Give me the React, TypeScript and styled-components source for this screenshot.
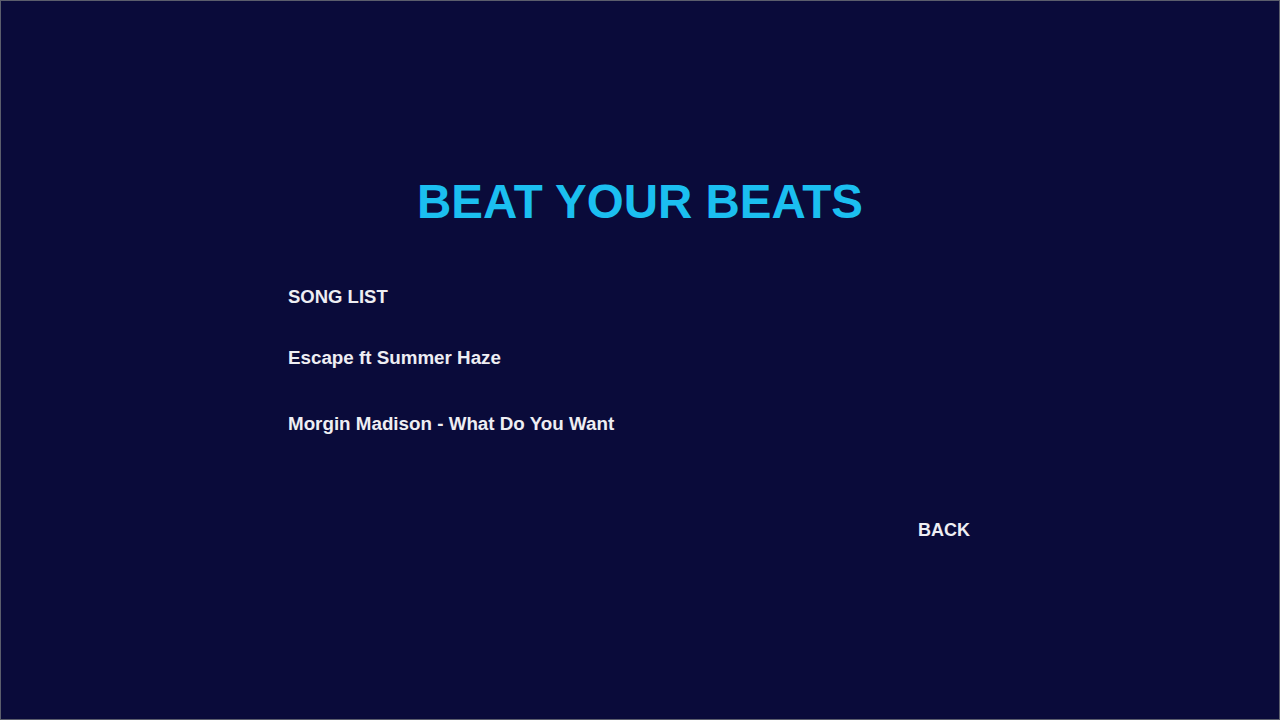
import { createGlobalStyle, styled } from 'styled-components';

const songs = ['Escape ft Summer Haze', 'Morgin Madison - What Do You Want'];

const GlobalStyle = createGlobalStyle`
  html, body {
    margin: 0;
    padding: 0;
    background: #0a0b3a;
  }
  * {
    box-sizing: border-box;
  }
`;

export default function App() {
  return (
    <>
      <GlobalStyle />
      <Screen>
        <Title>BEAT YOUR BEATS</Title>
        <Menu>
          <Heading>SONG LIST</Heading>
          <SongList>
            {songs.map((song) => (
              <Song key={song}>{song}</Song>
            ))}
          </SongList>
          <BackButton>BACK</BackButton>
        </Menu>
      </Screen>
    </>
  );
}

const Screen = styled.div`
  width: 100%;
  height: 100vh;
  border: 1px solid #5b5e6c;
  background: #0a0b3a;
  padding-top: 178px;
  display: flex;
  flex-direction: column;
  align-items: center;
  font-family: 'Liberation Sans', Arial, sans-serif;
  font-weight: 700;
`;

const Title = styled.h1`
  margin: 0;
  font-size: 47.5px;
  line-height: 46px;
  font-weight: 700;
  color: #1bbff0;
`;

const Menu = styled.div`
  width: 682px;
  margin-left: -22px;
  margin-top: 63px;
  display: flex;
  flex-direction: column;
  color: #eeeef3;
  font-size: 18.8px;
  line-height: 18px;
`;

const Heading = styled.div`
  font-size: 18.5px;
`;

const SongList = styled.div`
  display: flex;
  flex-direction: column;
  gap: 48px;
  margin-top: 43px;
`;

const Song = styled.div`
  cursor: pointer;
`;

const BackButton = styled.div`
  align-self: flex-end;
  margin-top: 88px;
  font-size: 18px;
  cursor: pointer;
`;
